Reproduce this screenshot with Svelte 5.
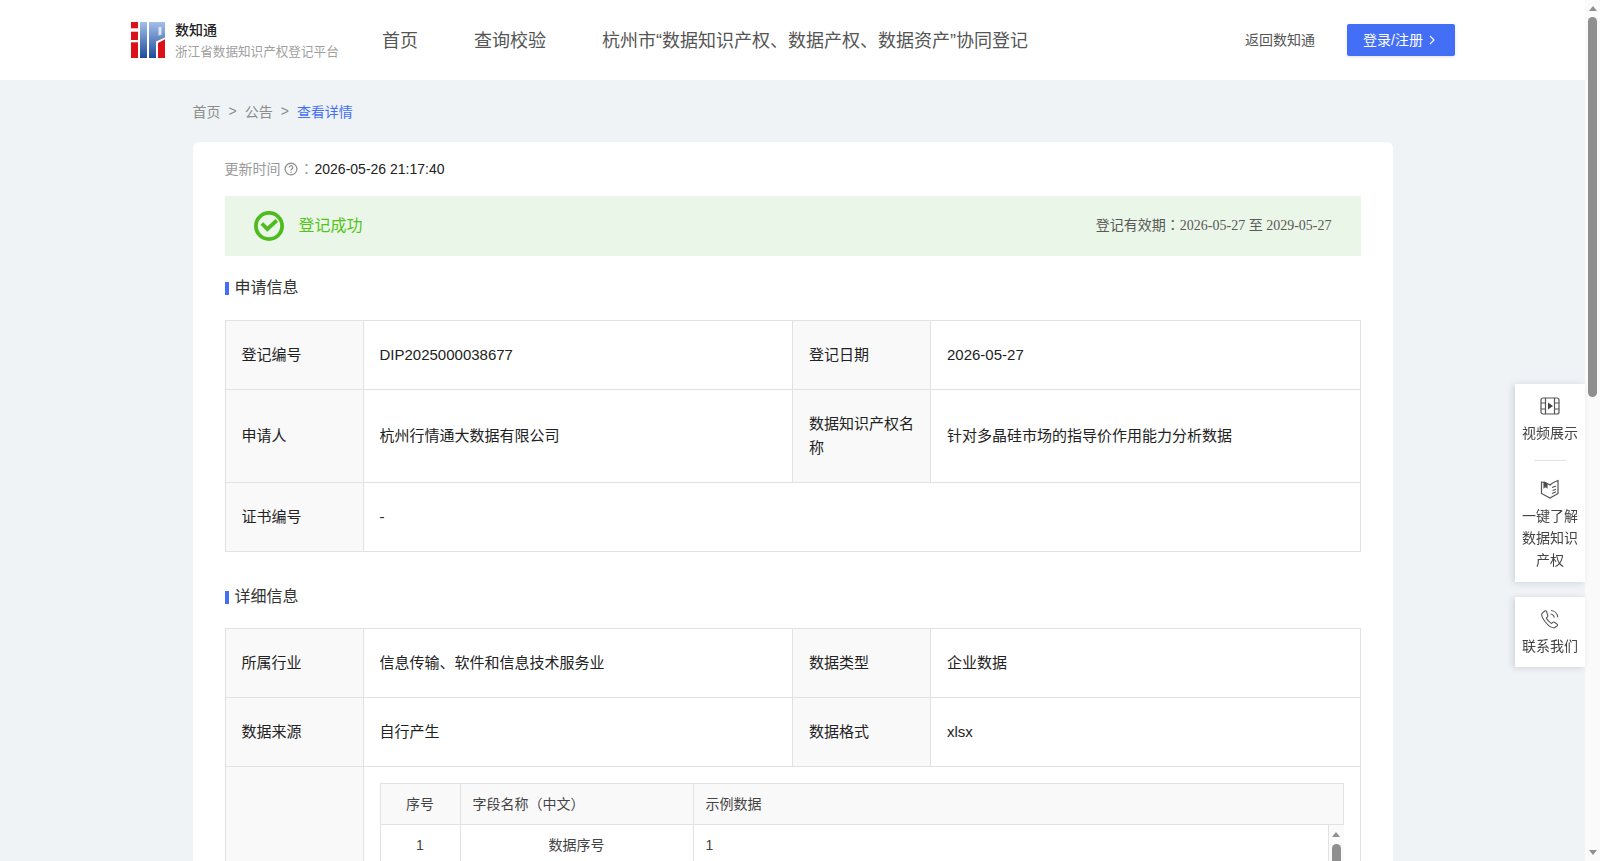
<script lang="ts">
    const applyRows = [
        { cells: [["登记编号", "DIP2025000038677"], ["登记日期", "2026-05-27"]], tall: false },
        { cells: [["申请人", "杭州行情通大数据有限公司"], ["数据知识产权名称", "针对多晶硅市场的指导价作用能力分析数据"]], tall: true },
        { cells: [["证书编号", "-"]], tall: false }
    ];
    const detailRows = [
        { cells: [["所属行业", "信息传输、软件和信息技术服务业"], ["数据类型", "企业数据"]], tall: false },
        { cells: [["数据来源", "自行产生"], ["数据格式", "xlsx"]], tall: false }
    ];
    const samples = [["1", "数据序号", "1"]];
</script>

<div class="viewport">
    <div class="scroll-area">
        <header class="topbar">
            <div class="brand">
                <svg class="logo" width="34" height="36" viewBox="0 0 34 36">
                    <defs>
                        <linearGradient id="blueFade" x1="0" y1="0" x2="0" y2="1">
                            <stop offset="0" stop-color="#a3c0e8" />
                            <stop offset="1" stop-color="#1f4a9a" />
                        </linearGradient>
                    </defs>
                    <rect x="0" y="0" width="7" height="36" fill="#dc1018" />
                    <rect x="0" y="6.300" width="7" height="3.400" fill="#fff" />
                    <rect x="0" y="18" width="7" height="2.300" fill="#fff" />
                    <rect x="9" y="0" width="7" height="36" fill="url(#blueFade)" />
                    <path d="M18 0h16v15.500L25 19.500V36h-7z" fill="url(#blueFade)" />
                    <path d="M27.500 5h3v7.500l-3 1.300z" fill="#dbe6f6" />
                    <path d="M27 36V21l7-3.700V36z" fill="#dc1018" />
                </svg>
                <div class="brand-text">
                    <strong>数知通</strong>
                    <span>浙江省数据知识产权登记平台</span>
                </div>
            </div>
            <nav class="nav">
                <a href="#home">首页</a>
                <a href="#query">查询校验</a>
                <a href="#hz">杭州市“数据知识产权、数据产权、数据资产”协同登记</a>
            </nav>
            <div class="actions">
                <a class="back" href="#back">返回数知通</a>
                <button class="login"><span>登录/注册</span>
                    <svg width="6" height="10" viewBox="0 0 6 10"><path d="M1 1l4 4-4 4" fill="none" stroke="#fff" stroke-width="1.200" /></svg>
                </button>
            </div>
        </header>

        <main class="page">
            <div class="crumbs">
                <span>首页</span><i>&gt;</i><span>公告</span><i>&gt;</i><span class="current">查看详情</span>
            </div>

            <section class="card">
                <div class="updated">
                    <span class="muted">更新时间</span>
                    <svg class="help" width="14" height="14" viewBox="0 0 14 14">
                        <circle cx="7" cy="7" r="5.900" fill="none" stroke="#8c8c8c" stroke-width="1.200" />
                        <path d="M5.200 5.600a1.800 1.800 0 1 1 2.700 1.500c-.6.400-.9.700-.9 1.300" fill="none" stroke="#8c8c8c" stroke-width="1.200" />
                        <circle cx="7" cy="10.200" r=".8" fill="#8c8c8c" />
                    </svg>
                    <span class="muted colon">：</span>
                    <span>2026-05-26 21:17:40</span>
                </div>

                <div class="status">
                    <svg width="30" height="30" viewBox="0 0 30 30">
                        <circle cx="15" cy="15" r="13.100" fill="none" stroke="#4ebb1f" stroke-width="3.800" />
                        <path d="M7.900 12.500l5.400 5.600 9.400-8.600" fill="none" stroke="#4ebb1f" stroke-width="3.800" />
                    </svg>
                    <span class="status-text">登记成功</span>
                    <span class="validity">登记有效期<span class="colon-glyph">：</span>2026-05-27 至 2029-05-27</span>
                </div>

                <h3 class="title">申请信息</h3>
                <div class="info">
                    {#each applyRows as row}
                        <div class="row" class:tall={row.tall}>
                            {#each row.cells as [label, value]}
                                <div class="label">{label}</div>
                                <div class="value" class:wide={row.cells.length === 1}>{value}</div>
                            {/each}
                        </div>
                    {/each}
                </div>

                <h3 class="title detail">详细信息</h3>
                <div class="info">
                    {#each detailRows as row}
                        <div class="row">
                            {#each row.cells as [label, value]}
                                <div class="label">{label}</div>
                                <div class="value">{value}</div>
                            {/each}
                        </div>
                    {/each}
                    <div class="row sample-row">
                        <div class="label"></div>
                        <div class="value wide sample-cell">
                            <div class="sample">
                                <div class="sample-head">
                                    <div class="c-no">序号</div>
                                    <div class="c-name">字段名称（中文）</div>
                                    <div class="c-eg">示例数据</div>
                                </div>
                                <div class="sample-body">
                                    <div class="sample-rows">
                                        {#each samples as [no, name, eg]}
                                            <div class="sample-line">
                                                <div class="c-no">{no}</div>
                                                <div class="c-name center">{name}</div>
                                                <div class="c-eg">{eg}</div>
                                            </div>
                                        {/each}
                                    </div>
                                    <div class="bar inner-bar">
                                        <div class="arrow up"></div>
                                        <div class="thumb inner-thumb"></div>
                                    </div>
                                </div>
                            </div>
                        </div>
                    </div>
                </div>
            </section>
        </main>
    </div>

    <div class="bar page-bar">
        <div class="arrow up"></div>
        <div class="thumb page-thumb"></div>
        <div class="arrow down"></div>
    </div>
</div>

<aside class="float">
    <div class="float-box first">
        <a class="float-item video" href="#video">
            <svg width="20" height="18" viewBox="0 0 20 18" fill="none" stroke="#555" stroke-width="1.200">
                <rect x="1" y="1" width="18" height="16" rx="2" />
                <path d="M5.500 1v16M14.500 1v16M1 6h4.500M1 12h4.500M14.500 6h4.500M14.500 12h4.500" />
                <path d="M8 5.500v7l5-3.500z" fill="#444" stroke="none" />
            </svg>
            <span>视频展示</span>
        </a>
        <div class="float-rule"></div>
        <a class="float-item" href="#learn">
            <svg width="20" height="21" viewBox="0 0 20 21" fill="none" stroke="#555" stroke-width="1.200">
                <path d="M1.500 4c3 .2 6 1 8.500 3 1.800-1.800 4.500-3.300 8-4.500V15.500L10 20l-8.500-4.500z" />
                <path d="M4 3.500v6l1.500-1.300L7 9.500V5" fill="#444" />
                <path d="M12 9.500l4-1.500M12.500 12.500l3.500-1.300M12 15.500l4-1.700" />
            </svg>
            <span>一键了解数据知识产权</span>
        </a>
    </div>
    <div class="float-box second">
        <a class="float-item" href="#contact">
            <svg width="20" height="20" viewBox="0 0 20 20" fill="none" stroke="#555" stroke-width="1.100">
                <path d="M4.800 2 2.500 3.800C1.300 5 1.800 8.300 5 12.500s7 6.700 9.500 6.200l2.500-1.700c.8-.6.700-1.400.1-1.900l-2.700-1.900c-.6-.4-1.200-.3-1.700.2l-1 1.100C10 14 7 10.800 6.300 8.800l1.100-1c.5-.5.600-1.100.2-1.700L6.500 2.300C6 1.700 5.400 1.600 4.800 2z" />
                <path d="M10.500 5c2 .2 3.500 1.600 3.800 3.700M11 1.500c3.500.3 6.400 3 6.800 6.800" />
            </svg>
            <span>联系我们</span>
        </a>
    </div>
</aside>

<style>
    :global(body) {
        margin: 0;
        background: #eff3f6;
        font-family: "Liberation Sans", "Noto Sans CJK SC", sans-serif;
        color: #222;
        font-size: 15px;
    }

    a {
        color: inherit;
        text-decoration: none;
    }

    .viewport {
        display: flex;
        height: 100vh;
        overflow: hidden;
    }

    .scroll-area {
        flex: 1;
        min-width: 0;
        overflow: hidden;
    }

    .bar {
        flex: none;
        display: flex;
        flex-direction: column;
        align-items: center;
        width: 15px;
        background: #fafafa;
    }

    .arrow {
        width: 0;
        height: 0;
        border-left: 4.500px solid transparent;
        border-right: 4.500px solid transparent;
    }

    .arrow.up {
        margin-top: 6px;
        border-bottom: 5px solid #8f8f8f;
    }

    .arrow.down {
        margin-top: auto;
        margin-bottom: 6px;
        border-top: 5px solid #8f8f8f;
    }

    .thumb {
        width: 9px;
        border-radius: 5px;
        background: #8f8f8f;
    }

    .page-thumb {
        height: 380px;
        margin-top: 6px;
    }

    .inner-bar .arrow.up {
        margin-top: 7px;
    }

    .inner-thumb {
        height: 60px;
        margin-top: 7px;
    }

    .topbar {
        display: flex;
        align-items: center;
        height: 80px;
        background: #fff;
        padding: 0 130px 0 131px;
    }

    .brand {
        display: flex;
        align-items: center;
        gap: 10px;
        width: 251px;
        flex: none;
    }

    .brand-text {
        display: flex;
        flex-direction: column;
        gap: 3px;
    }

    .brand-text strong {
        font-size: 14px;
        font-weight: 500;
        line-height: 20px;
        color: #222;
    }

    .brand-text span {
        font-size: 12.600px;
        line-height: 18px;
        color: #a0a0a0;
    }

    .nav {
        display: flex;
        gap: 56px;
        margin-bottom: 2px;
        font-size: 18px;
        color: #555;
    }

    .actions {
        margin-left: auto;
        display: flex;
        align-items: center;
        gap: 32px;
    }

    .back {
        margin-bottom: 2px;
        font-size: 14px;
        color: #555;
    }

    .login {
        display: flex;
        align-items: center;
        gap: 6px;
        height: 32px;
        padding: 0 20px 0 16px;
        border: 0;
        border-radius: 2px;
        background: #436ff6;
        color: #fff;
        font: inherit;
        font-size: 14px;
        box-shadow: 0 1px 3px rgba(0, 0, 0, 0.12);
    }

    .login span {
        margin-bottom: 2px;
    }

    .page {
        width: 1200px;
        margin: 0 auto;
        padding-bottom: 40px;
    }

    .crumbs {
        display: flex;
        gap: 8px;
        align-items: center;
        height: 61px;
        margin-bottom: 1px;
        font-size: 14px;
        color: #8c8c8c;
    }

    .crumbs i {
        font-style: normal;
    }

    .current {
        color: #436ff6;
    }

    .card {
        background: #fff;
        border-radius: 6px;
        padding: 0 32px 32px;
    }

    .updated {
        display: flex;
        align-items: center;
        gap: 2px;
        height: 54px;
        font-size: 14px;
    }

    .help {
        margin-left: 1px;
    }

    .muted {
        margin-bottom: 2px;
        color: #999;
    }

    .colon {
        margin-right: -1px;
    }

    .colon,
    .colon-glyph {
        font-family: "Noto Sans CJK TC", sans-serif;
    }

    .status {
        display: flex;
        align-items: center;
        height: 60px;
        padding: 0 29px;
        background: #eaf6e7;
    }

    .status-text {
        margin: 0 0 4px 15px;
        font-size: 16px;
        color: #52c41a;
    }

    .validity {
        margin: 0 0 4px auto;
        font-family: "Liberation Serif", "Noto Sans CJK SC", serif;
        font-size: 14px;
        color: #595959;
    }

    .title {
        position: relative;
        margin: 22px 0 22px;
        padding-left: 10px;
        font-size: 16px;
        font-weight: 400;
        line-height: 20px;
        color: #333;
    }

    .title::before {
        content: "";
        position: absolute;
        left: 0;
        top: 4px;
        width: 4px;
        height: 13px;
        background: #436ff6;
    }

    .title.detail {
        margin: 35px 0 21px;
    }

    .info {
        border: 1px solid #e2e2e2;
        border-bottom: 0;
    }

    .row {
        display: grid;
        grid-template-columns: 138px 429.500px 138px 1fr;
        min-height: 68px;
        border-bottom: 1px solid #e2e2e2;
    }

    .row.tall {
        min-height: 92px;
    }

    .label,
    .value {
        display: flex;
        align-items: center;
        padding: 0 16px;
        line-height: 24px;
    }

    .label {
        background: #f9f9f9;
        border-right: 1px solid #e2e2e2;
    }

    .value {
        border-right: 1px solid #e2e2e2;
    }

    .value:last-child {
        border-right: 0;
    }

    .value.wide {
        grid-column: 2 / -1;
    }

    .sample-cell {
        align-items: flex-start;
        padding: 16px;
    }

    .sample {
        width: 100%;
        font-size: 14px;
        color: #444;
    }

    .sample-head,
    .sample-line {
        display: grid;
        grid-template-columns: 80px 233px 1fr;
    }

    .sample-head {
        box-sizing: border-box;
        height: 42px;
        background: #f9f9f9;
        border: 1px solid #e2e2e2;
    }

    .sample-head > div,
    .sample-line > div {
        display: flex;
        align-items: center;
        padding: 0 12px;
        border-right: 1px solid #e2e2e2;
    }

    .sample-head > div:last-child,
    .sample-line > div:last-child {
        border-right: 0;
    }

    .sample-head .c-no,
    .sample-line .c-no,
    .center {
        justify-content: center;
    }

    .sample-body {
        display: flex;
        height: 240px;
        border-left: 1px solid #e2e2e2;
        border-bottom: 1px solid #e2e2e2;
    }

    .sample-rows {
        flex: 1;
        min-width: 0;
        border-right: 1px solid #e2e2e2;
    }

    .sample-line {
        height: 40px;
        border-bottom: 1px solid #e2e2e2;
    }

    .float {
        position: fixed;
        right: 15px;
        top: 384px;
        display: flex;
        flex-direction: column;
        gap: 15px;
        width: 70px;
        color: #444;
        font-size: 14px;
    }

    .float-box {
        background: #fff;
        box-shadow: -2px 1px 6px rgba(60, 70, 90, 0.18);
    }

    .float-box.first {
        padding: 13px 0 11px;
    }

    .float-box.second {
        padding: 12px 0 10px;
    }

    .float-item {
        display: flex;
        flex-direction: column;
        align-items: center;
        gap: 6px;
        padding: 0 6px;
        text-align: center;
        line-height: 22px;
    }

    .float-item.video {
        gap: 7px;
    }

    .float-rule {
        width: 32px;
        height: 1px;
        margin: 16px auto 17px;
        background: #e2e2e2;
    }
</style>
